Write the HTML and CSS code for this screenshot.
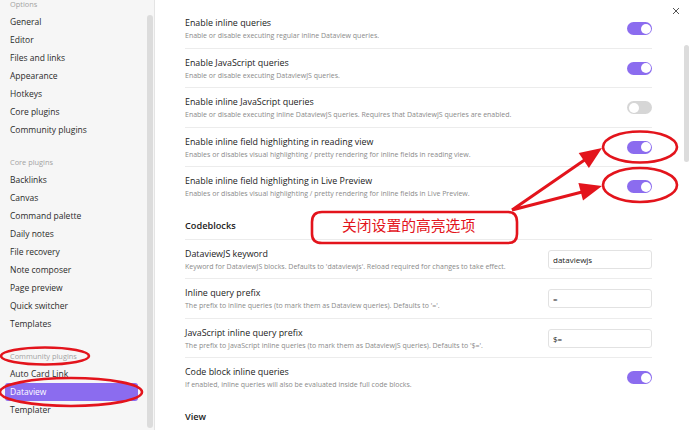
FILE: index.html
```html
<!DOCTYPE html>
<html lang="en">
<head>
    <meta charset="UTF-8">
    <title>Settings - Dataview</title>
    <link rel="stylesheet" href="styles.css">
</head>
<body>
    <div class="modal">
        <!-- Left navigation -->
        <nav class="sidebar">
            <div class="nav-list">
                <div class="nav-group">
                    <div class="nav-header">Options</div>
                    <div class="nav-item">General</div>
                    <div class="nav-item">Editor</div>
                    <div class="nav-item">Files and links</div>
                    <div class="nav-item">Appearance</div>
                    <div class="nav-item">Hotkeys</div>
                    <div class="nav-item">Core plugins</div>
                    <div class="nav-item">Community plugins</div>
                </div>
                <div class="nav-group">
                    <div class="nav-header">Core plugins</div>
                    <div class="nav-item">Backlinks</div>
                    <div class="nav-item">Canvas</div>
                    <div class="nav-item">Command palette</div>
                    <div class="nav-item">Daily notes</div>
                    <div class="nav-item">File recovery</div>
                    <div class="nav-item">Note composer</div>
                    <div class="nav-item">Page preview</div>
                    <div class="nav-item">Quick switcher</div>
                    <div class="nav-item">Templates</div>
                </div>
                <div class="nav-group">
                    <div class="nav-header">Community plugins</div>
                    <div class="nav-item">Auto Card Link</div>
                    <div class="nav-item active">Dataview</div>
                    <div class="nav-item">Templater</div>
                </div>
            </div>
            <div class="scroll-track"><div class="scroll-thumb side"></div></div>
        </nav>

        <!-- Plugin settings -->
        <main class="content">
            <div class="settings">
                <div class="setting-item">
                    <div class="setting-info">
                        <div class="setting-name">Enable inline queries</div>
                        <div class="setting-desc">Enable or disable executing regular inline Dataview queries.</div>
                    </div>
                    <div class="toggle on"></div>
                </div>
                <div class="setting-item">
                    <div class="setting-info">
                        <div class="setting-name">Enable JavaScript queries</div>
                        <div class="setting-desc">Enable or disable executing DataviewJS queries.</div>
                    </div>
                    <div class="toggle on"></div>
                </div>
                <div class="setting-item">
                    <div class="setting-info">
                        <div class="setting-name">Enable inline JavaScript queries</div>
                        <div class="setting-desc">Enable or disable executing inline DataviewJS queries. Requires that DataviewJS queries are enabled.</div>
                    </div>
                    <div class="toggle"></div>
                </div>
                <div class="setting-item">
                    <div class="setting-info">
                        <div class="setting-name">Enable inline field highlighting in reading view</div>
                        <div class="setting-desc">Enables or disables visual highlighting / pretty rendering for inline fields in reading view.</div>
                    </div>
                    <div class="toggle on"></div>
                </div>
                <div class="setting-item last">
                    <div class="setting-info">
                        <div class="setting-name">Enable inline field highlighting in Live Preview</div>
                        <div class="setting-desc">Enables or disables visual highlighting / pretty rendering for inline fields in Live Preview.</div>
                    </div>
                    <div class="toggle on"></div>
                </div>

                <div class="setting-heading">Codeblocks</div>
                <div class="setting-item">
                    <div class="setting-info">
                        <div class="setting-name">DataviewJS keyword</div>
                        <div class="setting-desc">Keyword for DataviewJS blocks. Defaults to 'dataviewjs'. Reload required for changes to take effect.</div>
                    </div>
                    <input class="text-input" type="text" value="dataviewjs">
                </div>
                <div class="setting-item">
                    <div class="setting-info">
                        <div class="setting-name">Inline query prefix</div>
                        <div class="setting-desc">The prefix to inline queries (to mark them as Dataview queries). Defaults to '='.</div>
                    </div>
                    <input class="text-input" type="text" value="=">
                </div>
                <div class="setting-item">
                    <div class="setting-info">
                        <div class="setting-name">JavaScript inline query prefix</div>
                        <div class="setting-desc">The prefix to JavaScript inline queries (to mark them as DataviewJS queries). Defaults to '$='.</div>
                    </div>
                    <input class="text-input" type="text" value="$=">
                </div>
                <div class="setting-item last">
                    <div class="setting-info">
                        <div class="setting-name">Code block inline queries</div>
                        <div class="setting-desc">If enabled, inline queries will also be evaluated inside full code blocks.</div>
                    </div>
                    <div class="toggle on"></div>
                </div>

                <div class="setting-heading">View</div>
            </div>
            <div class="scroll-track main"><div class="scroll-thumb"></div></div>
        </main>

        <button class="close-btn" aria-label="Close">
            <svg width="8" height="8" viewBox="0 0 8 8"><path d="M1 1 L7 7 M7 1 L1 7" stroke="#555" stroke-width="1" fill="none"/></svg>
        </button>

        <!-- Red annotations drawn over the screenshot -->
        <svg class="annotations" width="690" height="430" viewBox="0 0 690 430">
            <g fill="none" stroke="#e3141c" stroke-width="2.6">
                <ellipse cx="640" cy="147" rx="37" ry="15.5"/>
                <ellipse cx="640" cy="185" rx="37" ry="17"/>
                <ellipse cx="45" cy="356" rx="44" ry="8.5"/>
                <ellipse cx="71" cy="392" rx="71" ry="14"/>
                <path d="M322 212 Q312 212 312 222 L312 234 Q312 243 322 243 L508 243 Q517 243 517 234 L517 222 Q517 212 508 212 Z"/>
                <path d="M512 210 L586 159 M512 210 L582 192" stroke-width="3"/>
            </g>
            <g fill="#e3141c">
                <polygon points="602,148 578.7,153.1 588.9,167.9"/>
                <polygon points="602,186 578.4,183 583,200.4"/>
            </g>
        </svg>
        <div class="callout">关闭设置的高亮选项</div>
    </div>
</body>
</html>
```

FILE: styles.css
```css
/* Settings modal */
* {
    box-sizing: border-box;
}
body {
    margin: 0;
    padding: 0;
    background-color: #ffffff;
    font-family: "Open Sans", "Noto Sans", sans-serif;
    color: #222222;
}
.modal {
    position: relative;
    display: flex;
    width: 690px;
    height: 430px;
    overflow: hidden;
}

/* Sidebar */
.sidebar {
    display: flex;
    width: 155px;
    height: 430px;
    background-color: #f6f6f6;
    border-right: 1px solid #e4e4e4;
}
.nav-list {
    width: 138px;
    padding-left: 5px;
    margin-top: -5px;
}
.nav-group {
    margin-bottom: 14px;
}
.nav-header {
    height: 18px;
    line-height: 18px;
    padding-left: 5px;
    font-size: 7.4px;
    color: #a3a3a3;
}
.nav-item {
    height: 18px;
    line-height: 18px;
    padding-left: 5px;
    font-size: 8.5px;
    color: #2b2b2b;
    border-radius: 3px;
}
.nav-item.active {
    background-color: #8b6cef;
    color: #ffffff;
}
.scroll-track {
    width: 6px;
    margin-left: 9px;
}
.scroll-thumb {
    height: 117px;
    margin-top: 45px;
    border-radius: 3px;
    background-color: #dcdcdc;
}
.scroll-thumb.side {
    height: 413px;
    margin-top: 15px;
}

/* Main content */
.content {
    flex: 1;
    display: flex;
    padding-left: 30px;
}
.settings {
    width: 467px;
    padding-top: 9px;
}
.scroll-track.main {
    width: 5px;
    margin-left: 32px;
}
.setting-item {
    display: flex;
    align-items: center;
    padding: 7px 0 6.5px;
    border-bottom: 1px solid #ececec;
}
.setting-item.last {
    border-bottom: none;
}
.setting-info {
    flex: 1;
}
.setting-name {
    font-size: 8.9px;
    line-height: 13px;
    color: #222222;
}
.setting-desc {
    margin-top: 1px;
    font-size: 7px;
    line-height: 11px;
    color: #8a8a8a;
}
.setting-heading {
    margin-top: 13px;
    padding-bottom: 7px;
    font-size: 9.2px;
    line-height: 13px;
    font-weight: 600;
    color: #222222;
    border-bottom: 1px solid #ececec;
}

/* Controls */
.toggle {
    position: relative;
    width: 25px;
    height: 13px;
    border-radius: 7px;
    background-color: #d6d6d6;
}
.toggle::after {
    content: "";
    position: absolute;
    top: 1.5px;
    left: 1.5px;
    width: 10px;
    height: 10px;
    border-radius: 50%;
    background-color: #ffffff;
}
.toggle.on {
    background-color: #8b6cef;
}
.toggle.on::after {
    left: 13.5px;
}
.text-input {
    width: 104px;
    height: 19px;
    padding: 0 4px;
    border: 1px solid #e2e2e2;
    border-radius: 3px;
    font-family: "Open Sans", "Noto Sans", sans-serif;
    font-size: 8px;
    color: #222222;
    background-color: #ffffff;
}

.close-btn {
    position: absolute;
    top: 3px;
    left: 671px;
    width: 10px;
    height: 10px;
    padding: 0;
    border: none;
    background: none;
}

/* Annotation overlay */
.annotations {
    position: absolute;
    top: 0;
    left: 0;
    pointer-events: none;
}
.callout {
    position: absolute;
    top: 215px;
    left: 342px;
    font-family: "Noto Sans CJK SC", sans-serif;
    font-size: 14.8px;
    line-height: 20px;
    color: #e3141c;
}
```
